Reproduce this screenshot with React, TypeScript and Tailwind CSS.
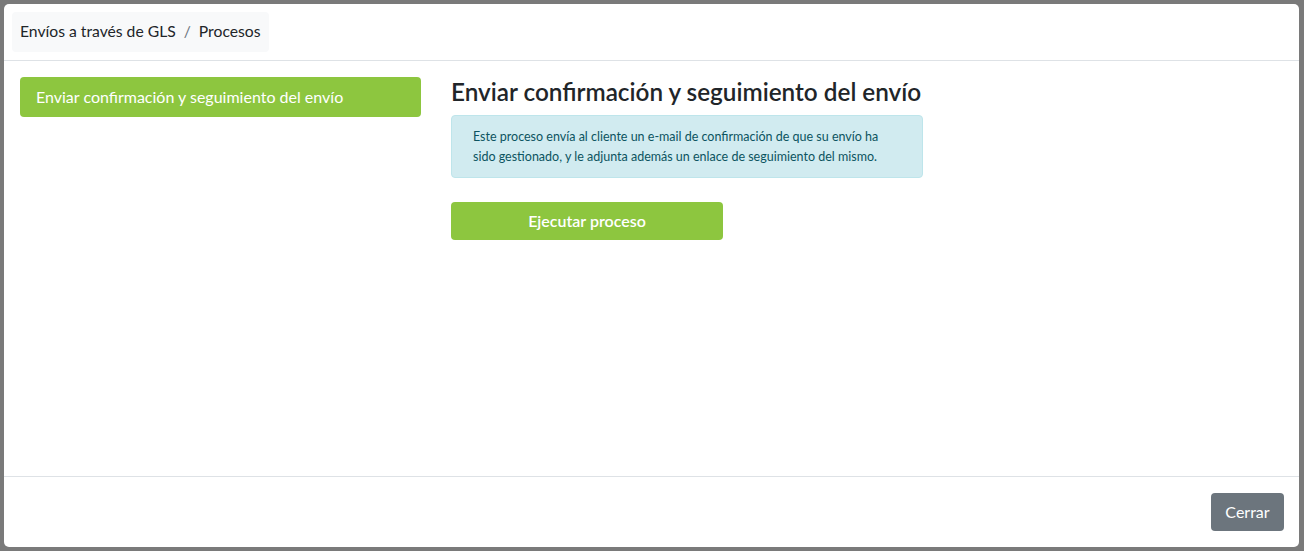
export default function App() {
  return (
    <div className="w-[1304px] h-[551px] bg-[#7a7a7a] p-[4px] font-['Lato','Noto_Sans',sans-serif] overflow-hidden">
      <div className="w-[1295px] h-[543px] bg-white rounded-[5px] flex flex-col">
        {/* Header */}
        <div className="h-[57px] shrink-0 border-b border-[#dee2e6] px-[8px] pt-[8px]">
          <div className="inline-flex items-center h-[40px] px-[8px] bg-[#f8f9fa] rounded-[4px] text-[15.7px] text-[#212529]">
            <span>Envíos a través de GLS</span>
            <span className="px-[8px] text-[#6c757d]">/</span>
            <span>Procesos</span>
          </div>
        </div>

        {/* Body */}
        <div className="flex-1 flex px-[16px] pt-[16px]">
          <div className="w-[401px] shrink-0">
            <div className="h-[40px] flex items-center px-[16px] bg-[#8dc63f] rounded-[4px] text-white text-[16px]">
              Enviar confirmación y seguimiento del envío
            </div>
          </div>
          <div className="ml-[30px] w-[472px]">
            <h4 className="text-[24.3px] leading-[28px] font-semibold text-[#212529] mt-[1px] mb-[9px] whitespace-nowrap">
              Enviar confirmación y seguimiento del envío
            </h4>
            <div className="bg-[#d1ebf0] border border-[#bee5eb] rounded-[4px] pl-[21px] pr-[16px] pt-[11px] pb-[10px] text-[12.5px] leading-[20px] text-[#0c5460]">
              Este proceso envía al cliente un e-mail de confirmación de que su envío ha
              <br />
              sido gestionado, y le adjunta además un enlace de seguimiento del mismo.
            </div>
            <button className="mt-[24px] w-[272px] h-[38px] bg-[#8dc63f] rounded-[4px] text-white text-[16px] font-semibold">
              Ejecutar proceso
            </button>
          </div>
        </div>

        {/* Footer */}
        <div className="h-[71px] shrink-0 border-t border-[#dee2e6] flex justify-end items-start pt-[16px] pr-[15px]">
          <button className="h-[38px] w-[73px] bg-[#6c757d] rounded-[4px] text-white text-[16px]">
            Cerrar
          </button>
        </div>
      </div>
    </div>
  );
}
